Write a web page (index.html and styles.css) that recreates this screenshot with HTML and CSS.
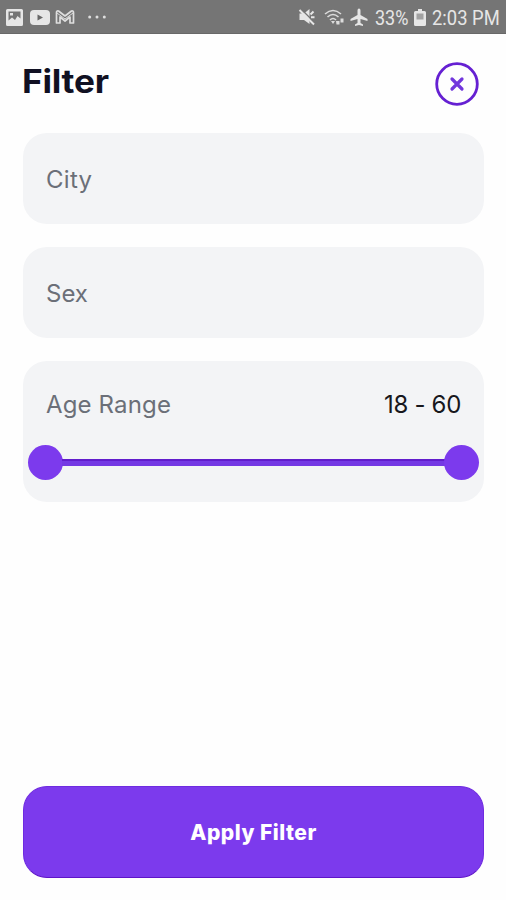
FILE: index.html
```html
<!DOCTYPE html>
<html lang="en">
<head>
<meta charset="utf-8">
<title>Filter</title>
<link rel="stylesheet" href="styles.css">
</head>
<body>
<div class="screen">
  <div class="status">
    <div class="status-left">
      <svg width="17" height="17" viewBox="0 0 17 17"><path fill="#e6e6e6" fill-rule="evenodd" d="M1.500 0h14Q17 0 17 1.500v14q0 1.500-1.500 1.500h-14Q0 17 0 15.500v-14Q0 0 1.500 0zM2.500 2.500v9l3.500-3 3 2.500 2.500-4 3 2.500v-7zM4 4h3v2.500h-3z"/></svg>
      <svg width="20" height="15" viewBox="0 0 20 15"><rect width="20" height="15" rx="4" fill="#e6e6e6"/><path d="M7.500 4.500v6l5.500-3z" fill="#686868"/></svg>
      <svg width="20" height="16" viewBox="0 0 20 16"><path d="M1.500 14V3.500q0-2 2-1.500l6.500 5 6.500-5q2-.5 2 1.500V14H15V8l-5 4-5-4v6z" fill="none" stroke="#dedede" stroke-width="1.700" stroke-linejoin="round"/><path d="M2 4l8 6 8-6" fill="none" stroke="#dedede" stroke-width="1"/></svg>
      <svg class="more" width="18" height="4" viewBox="0 0 18 4" fill="#dedede"><circle cx="1.700" cy="2" r="1.500"/><circle cx="9" cy="2" r="1.500"/><circle cx="16.300" cy="2" r="1.500"/></svg>
    </div>
    <div class="status-right">
      <svg class="mute" width="18" height="18" viewBox="0 0 18 18"><path d="M1.500 5.500H6L11.500 1v15L6 12H1.500z" fill="#e6e6e6"/><path d="M3 1l14 14" stroke="#757575" stroke-width="1.500"/><path d="M1.500 2L16 16.500M12.500 6.500l3-3M13 9.300h3.500" stroke="#e6e6e6" stroke-width="2"/></svg>
      <svg class="wifi" width="21" height="17" viewBox="0 0 21 17"><g fill="none" stroke="#dcdcdc" stroke-width="1.600"><path d="M1 5Q9-2 17 5M3.500 8Q9 3 14.500 8M6 11Q9 8 12 11"/></g><path d="M7 12h4l-2 3zM12 12h3.500v3.500h-3zM16.500 9.500h3v4h-3z" fill="#dcdcdc"/></svg>
      <svg class="plane" width="18" height="18" viewBox="0 0 18 18"><path d="M9 .5q1.500 0 1.500 2V7l7 4v2l-7-2v4l2.500 1.500V18L9 17l-4 1v-1.500L7.500 15v-4l-7 2v-2l7-4V2.500q0-2 1.500-2z" fill="#e6e6e6"/></svg>
      <span class="pct"><span class="narrow">33%</span></span>
      <svg class="battery" width="12" height="17" viewBox="0 0 12 17"><path d="M4 0h4v2h2.500Q12 2 12 3.500v12q0 1.500-1.500 1.500h-9Q0 17 0 15.500v-12Q0 2 1.500 2H4z" fill="#e6e6e6"/><path d="M2.500 4.500h7v6h-7z" fill="#a2a2a2"/></svg>
      <span class="time"><span class="narrow">2:03 PM</span></span>
    </div>
  </div>
  <header class="header">
    <h1 class="title">Filter</h1>
    <button class="close" aria-label="Close"><svg width="44" height="44" viewBox="0 0 44 44" fill="none"><circle cx="22" cy="22" r="20.300" stroke="#6520d2" stroke-width="2.800"/><path d="M17 17l10 10M27 17L17 27" stroke="#7136dc" stroke-width="3.200" stroke-linecap="round"/></svg></button>
  </header>
  <main class="fields">
    <div class="field"><span class="label city">City</span></div>
    <div class="field"><span class="label">Sex</span></div>
    <div class="range">
      <div class="range-top"><span class="label age">Age Range</span><span class="value">18 - 60</span></div>
      <div class="slider"><span class="thumb"></span><span class="track"></span><span class="thumb"></span></div>
    </div>
  </main>
  <button class="apply"><span class="apply-text">Apply Filter</span></button>
</div>
</body>
</html>
```
FILE: styles.css
```css
* { box-sizing: border-box; }
body { margin: 0; background: #fefefe; font-family: Inter, "Liberation Sans", sans-serif; }
button { border: 0; padding: 0; background: none; font-family: inherit; }
svg { display: block; flex: none; }
.screen { height: 900px; display: flex; flex-direction: column; overflow: hidden; }
.status { height: 34px; flex: none; display: flex; justify-content: space-between; background: #757575; border-bottom: 1px solid #686868; padding: 1px 7px 0 6px; }
.status-left, .status-right { display: flex; align-items: center; }
.status-left { gap: 7px; }
.status-left svg:nth-child(3) { margin-left: -2px; }
.more { margin-left: 6px; }
.wifi { margin-left: 8px; }
.plane { margin-left: 5px; }
.pct, .time { font: 400 20px/32px Roboto, sans-serif; color: #e6e6e6; white-space: nowrap; padding-top: 1px; }
.pct { width: 34px; margin-left: 7px; }
.time { width: 67px; margin-left: 6px; }
.battery { margin-left: 5px; }
.narrow { display: inline-block; transform-origin: left center; transform: scaleX(.9); }
.time .narrow { transform: scaleX(.92); }
.header { height: 99px; flex: none; display: flex; justify-content: space-between; align-items: center; padding: 0 27px 0 22px; }
.title { margin: 0 0 4px; font-size: 32px; line-height: 40px; font-weight: 700; color: #101022; letter-spacing: -.2px; transform: scaleX(1.1); transform-origin: left center; }
.fields { display: flex; flex-direction: column; gap: 23px; padding: 0 22px 0 23px; }
.field { height: 91px; border-radius: 24px; background: #f3f4f6; display: flex; align-items: center; padding: 3px 23px 0; }
.label { color: #6b6f78; font-size: 24px; line-height: 32px; white-space: nowrap; }
.city { letter-spacing: .3px; }
.age { letter-spacing: .15px; }
.range { height: 141px; border-radius: 24px; background: #f3f4f6; padding: 28px 5px 0; }
.range-top { display: flex; justify-content: space-between; padding: 0 18px; }
.value { color: #17171c; font-size: 24px; line-height: 32px; letter-spacing: -.3px; }
.slider { display: flex; align-items: center; margin-top: 24px; }
.thumb { width: 35px; height: 35px; border-radius: 50%; background: #7c3aed; flex: none; }
.track { flex: 1; height: 7px; margin: 0 -1px; background: #7438e4; border-top: 2px solid #611ccc; }
.apply { height: 92px; margin: auto 22px 22px 23px; border-radius: 24px; background: #7c3aed; border: 1px solid #6f2be0; border-bottom-color: #5e14c8; padding-top: 2px; color: #fff; }
.apply-text { font-size: 21px; line-height: 28px; font-weight: 800; letter-spacing: .5px; }
```
